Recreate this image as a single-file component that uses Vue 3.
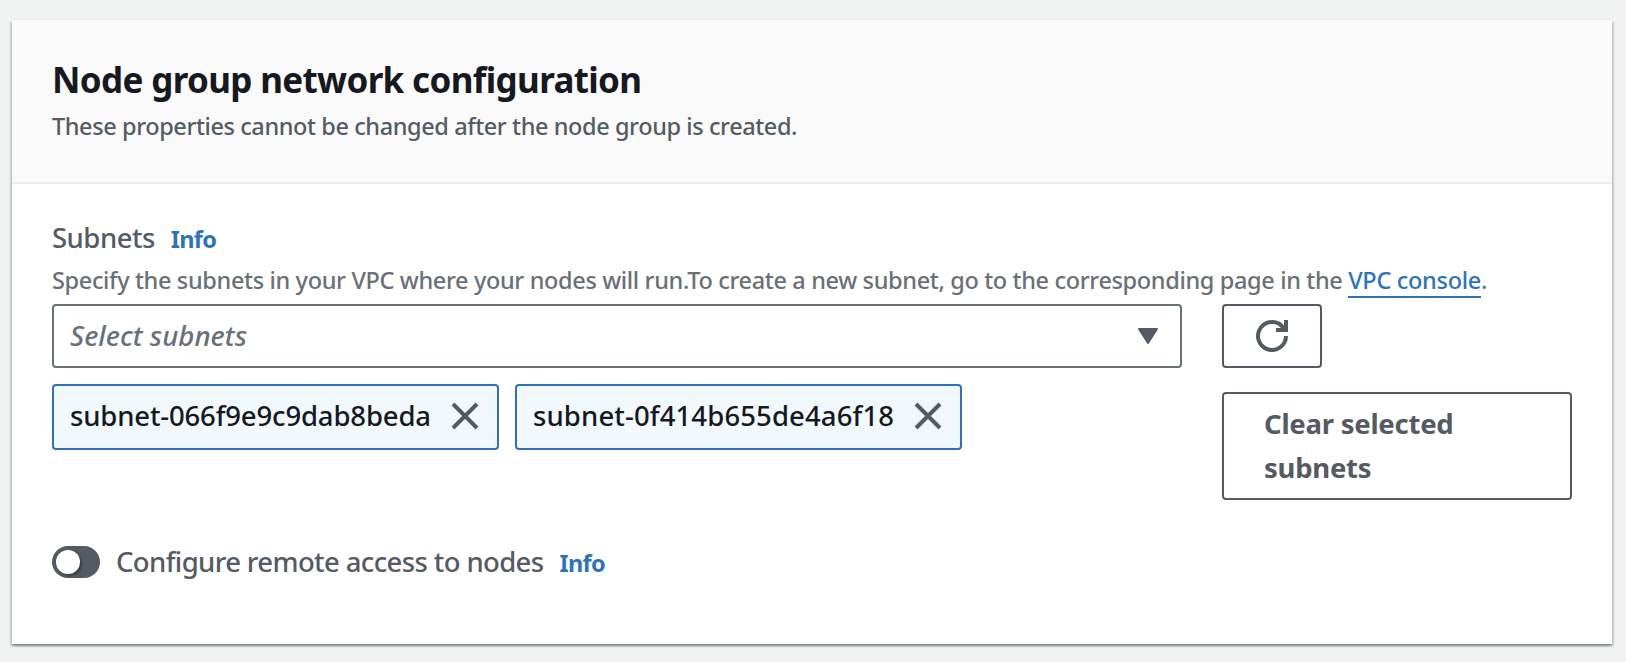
<script setup>
import { ref } from 'vue'

const tokens = ref([
  { id: 'subnet-066f9e9c9dab8beda', kind: 'letters' },
  { id: 'subnet-0f414b655de4a6f18', kind: 'digits' },
])
const remoteAccess = ref(false)

function remove(id) {
  tokens.value = tokens.value.filter((t) => t.id !== id)
}
</script>

<template>
  <main class="page">
    <section class="card">
      <header class="card-header">
        <h2 class="title">Node group network configuration</h2>
        <p class="subtitle">These properties cannot be changed after the node group is created.</p>
      </header>
      <div class="card-body">
        <div class="label-row">
          <span class="label">Subnets</span>
          <a class="info">Info</a>
        </div>
        <p class="hint">Specify the subnets in your VPC where your nodes will run.To create a new subnet, go to the corresponding page in the <a class="link">VPC console</a>.</p>
        <div class="field-row">
          <div class="field">
            <div class="select">
              <span class="placeholder">Select subnets</span>
              <svg class="caret" width="22" height="18" viewBox="0 0 22 18">
                <path d="M2 2H20L11 16Z" fill="#545b64" stroke="#545b64" stroke-width="2" stroke-linejoin="round" />
              </svg>
            </div>
            <div class="tokens">
              <div v-for="token in tokens" :key="token.id" class="token">
                <span class="token-text" :class="token.kind">{{ token.id }}</span>
                <svg class="close" width="28" height="28" viewBox="0 0 28 28" @click="remove(token.id)">
                  <path d="M2 2L26 26M26 2L2 26" fill="none" stroke="#545b64" stroke-width="4" />
                </svg>
              </div>
            </div>
          </div>
          <div class="actions">
            <button class="btn refresh" aria-label="Refresh">
              <svg width="32" height="32" viewBox="0 0 32 32" fill="none" stroke="#545b64" stroke-width="4">
                <path d="M30 16A14 14 0 1 1 27.5 8" />
                <path d="M20 10H30V0" />
              </svg>
            </button>
            <button class="btn clear" @click="tokens = []">Clear selected<br />subnets</button>
          </div>
        </div>
        <div class="toggle-row">
          <span class="toggle" :class="{ on: remoteAccess }" @click="remoteAccess = !remoteAccess"><span class="knob"></span></span>
          <span class="label toggle-label">Configure remote access to nodes</span>
          <a class="info">Info</a>
        </div>
      </div>
    </section>
  </main>
</template>

<style>
body {
  background: #f1f3f3;
}
</style>

<style scoped>
.page {
  box-sizing: border-box;
  height: 662px;
  padding: 20px 14px 18px 12px;
  background: #f1f3f3;
  font-family: "Noto Sans", "Open Sans", sans-serif;
  font-weight: 500;
  color: #545b64;
  white-space: nowrap;
  overflow: hidden;
}
.card {
  height: 624px;
  background: #fff;
  box-shadow: 0 2px 2px 0 rgba(0, 28, 36, 0.3), 2px 2px 2px 0 rgba(0, 28, 36, 0.15),
    -2px 2px 2px 0 rgba(0, 28, 36, 0.15), 0 -2px 0 0 #eaeded;
}
.card-header {
  box-sizing: border-box;
  height: 164px;
  padding: 39px 40px 0;
  background: #fafafa;
  border-bottom: 2px solid #eaeded;
}
.title {
  margin: 0;
  font-size: 35px;
  line-height: 42px;
  font-weight: 700;
  letter-spacing: -0.65px;
  color: #16191f;
}
.subtitle {
  margin: 9px 0 0;
  font-size: 23.5px;
  line-height: 32px;
  letter-spacing: -0.41px;
}
.card-body {
  padding: 34px 40px 0;
}
.label-row {
  display: flex;
  gap: 16px;
  height: 40px;
  line-height: 40px;
}
.label {
  font-size: 27.5px;
  letter-spacing: -0.5px;
}
.toggle-label {
  line-height: 38px;
  margin-top: -1px;
  letter-spacing: -0.62px;
}
.info {
  font-size: 23.5px;
  line-height: 43px;
  font-weight: 700;
  letter-spacing: -0.7px;
  color: #2e73b8;
}
.hint {
  margin: 6px 0 8px;
  font-size: 23.5px;
  line-height: 32px;
  letter-spacing: -0.355px;
  color: #687078;
}
.link {
  color: #2e73b8;
  border-bottom: 2px solid #2e73b8;
  letter-spacing: -0.3px;
}
.field-row {
  display: grid;
  grid-template-columns: 1130px 350px;
  column-gap: 40px;
  height: 196px;
}
.select {
  box-sizing: border-box;
  display: flex;
  align-items: center;
  justify-content: space-between;
  height: 64px;
  padding: 0 21px 0 16px;
  border: 2px solid #687078;
  border-radius: 4px;
}
.placeholder {
  font-size: 27.5px;
  line-height: 40px;
  font-style: italic;
  letter-spacing: 0.05px;
  color: #687078;
}
.tokens {
  display: flex;
  gap: 16px;
  margin-top: 16px;
}
.token {
  box-sizing: border-box;
  display: flex;
  align-items: center;
  justify-content: space-between;
  width: 447px;
  height: 66px;
  padding: 0 18px 2px 16px;
  border: 2px solid #2e73b8;
  border-radius: 4px;
  background: #f2f9fd;
}
.token-text {
  font-size: 27.5px;
  line-height: 40px;
  color: #16191f;
}
.token-text.letters {
  letter-spacing: -0.16px;
}
.token-text.digits {
  letter-spacing: 0.12px;
}
.btn {
  box-sizing: border-box;
  display: block;
  margin: 0;
  border: 2px solid #545b64;
  border-radius: 4px;
  background: #fff;
  color: #545b64;
  font-family: inherit;
}
.refresh {
  display: flex;
  align-items: center;
  justify-content: center;
  width: 100px;
  height: 64px;
  padding: 0;
}
.clear {
  width: 350px;
  height: 108px;
  margin-top: 24px;
  padding: 8px 40px;
  font-size: 27.5px;
  line-height: 44px;
  font-weight: 700;
  letter-spacing: -0.25px;
  text-align: left;
}
.toggle-row {
  display: flex;
  align-items: center;
  gap: 16px;
  height: 40px;
  margin-top: 42px;
}
.toggle-row .info {
  margin-top: 2px;
}
.toggle {
  box-sizing: border-box;
  width: 48px;
  height: 32px;
  padding: 4px;
  border-radius: 16px;
  background: #545b64;
}
.knob {
  display: block;
  width: 24px;
  height: 24px;
  border-radius: 50%;
  background: #fff;
  box-shadow: 2px 2px 2px rgba(0, 0, 0, 0.3);
}
.toggle.on {
  background: #0073bb;
}
.toggle.on .knob {
  margin-left: 16px;
}
</style>
